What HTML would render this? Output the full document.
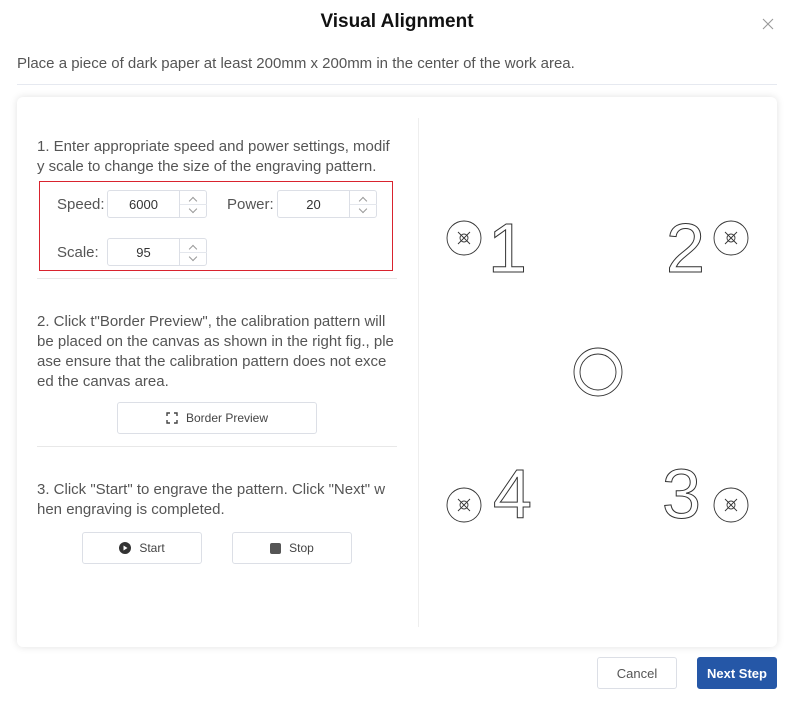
<!DOCTYPE html>
<html><head><meta charset="utf-8"><style>
*{box-sizing:border-box;margin:0;padding:0}
body{width:794px;height:724px;background:#fff;font-family:"Liberation Sans",sans-serif;position:relative;overflow:hidden;color:#555}
.abs{position:absolute}
.title{left:0;width:794px;top:11px;text-align:center;font-size:19px;font-weight:bold;color:#111}
.close{left:762px;top:18px}
.sub{left:17px;top:55px;font-size:15px;color:#555}
.hr{left:17px;width:760px;top:84px;height:1px;background:#e6e9f0}
.panel{left:17px;top:97px;width:760px;height:550px;background:#fff;border-radius:6px;box-shadow:0 0 8px rgba(0,0,0,.12)}
.vline{left:418px;top:118px;width:1px;height:509px;background:#eee}
.txt{font-size:15px;color:#555;line-height:20px}
.box{left:39px;top:181px;width:354px;height:90px;border:1px solid #d9232e}
.lbl{font-size:15px;color:#555}
.inp{width:100px;height:28px;border:1px solid #dcdfe6;border-radius:3px;background:#fff;font-size:13px;color:#333}
.inp .v{position:absolute;left:0;width:71px;top:6px;text-align:center}
.inp .sp{position:absolute;left:71px;top:0;width:28px;height:26px;border-left:1px solid #dcdfe6}
.inp .sp:after{content:"";position:absolute;left:0;right:0;top:13px;height:1px;background:#e4e7ed}
.sp i{position:absolute;left:10px;width:6px;height:6px;border-left:1px solid #999;border-top:1px solid #999}
.sep{left:37px;width:360px;height:1px;background:#e8e8e8}
.btn{border:1px solid #dcdfe6;border-radius:3px;background:#fff;font-size:12px;color:#444;text-align:center;display:flex;align-items:center;justify-content:center;gap:8px}
</style></head><body>
<div class="abs title">Visual Alignment</div>
<svg class="abs close" width="12" height="12" stroke="#999" stroke-width="1.1"><path d="M1 1l10 10M11 1L1 11"/></svg>
<div class="abs sub">Place a piece of dark paper at least 200mm x 200mm in the center of the work area.</div>
<div class="abs hr"></div>
<div class="abs panel"></div>
<div class="abs vline"></div>
<div class="abs txt" style="left:37px;top:137px;width:365px">1. Enter appropriate speed and power settings, modif<br>y scale to change the size of the engraving pattern.</div>
<div class="abs box"></div>
<div class="abs lbl" style="left:57px;top:196px">Speed:</div>
<div class="abs inp" style="left:107px;top:190px"><span class="v">6000</span><div class="sp"><i style="top:7px;transform:rotate(45deg)"></i><i style="top:15px;transform:rotate(225deg)"></i></div></div>
<div class="abs lbl" style="left:227px;top:196px">Power:</div>
<div class="abs inp" style="left:277px;top:190px"><span class="v">20</span><div class="sp"><i style="top:7px;transform:rotate(45deg)"></i><i style="top:15px;transform:rotate(225deg)"></i></div></div>
<div class="abs lbl" style="left:57px;top:244px">Scale:</div>
<div class="abs inp" style="left:107px;top:238px"><span class="v">95</span><div class="sp"><i style="top:7px;transform:rotate(45deg)"></i><i style="top:15px;transform:rotate(225deg)"></i></div></div>
<div class="abs sep" style="top:278px"></div>
<div class="abs txt" style="left:37px;top:312px;width:365px">2. Click t"Border Preview", the calibration pattern will<br>be placed on the canvas as shown in the right fig., ple<br>ase ensure that the calibration pattern does not exce<br>ed the canvas area.</div>
<div class="abs btn" style="left:117px;top:402px;width:200px;height:32px"><svg width="12" height="12" viewBox="0 0 12 12" fill="none" stroke="#444" stroke-width="1.4"><path d="M1 4V1h3M8 1h3v3M11 8v3H8M4 11H1V8"/></svg>Border Preview</div>
<div class="abs sep" style="top:446px"></div>
<div class="abs txt" style="left:37px;top:480px;width:365px">3. Click "Start" to engrave the pattern. Click "Next" w<br>hen engraving is completed.</div>
<div class="abs btn" style="left:82px;top:532px;width:120px;height:32px"><svg width="12" height="12" viewBox="0 0 12 12"><circle cx="6" cy="6" r="6" fill="#333"/><path d="M4.5 3.5L8.5 6L4.5 8.5Z" fill="#fff"/></svg>Start</div>
<div class="abs btn" style="left:232px;top:532px;width:120px;height:32px"><svg width="11" height="11"><rect width="11" height="11" rx="2" fill="#555"/></svg>Stop</div>
<svg class="abs" style="left:0;top:0" width="794" height="724" fill="none" stroke="#333" stroke-width="0.9">
<g><circle cx="464" cy="238" r="17"/><circle cx="464" cy="238" r="4"/><path d="M458 232l12 12M470 232l-12 12"/></g>
<g><circle cx="731" cy="238" r="17"/><circle cx="731" cy="238" r="4"/><path d="M725 232l12 12M737 232l-12 12"/></g>
<g><circle cx="464" cy="505" r="17"/><circle cx="464" cy="505" r="4"/><path d="M458 499l12 12M470 499l-12 12"/></g>
<g><circle cx="731" cy="505" r="17"/><circle cx="731" cy="505" r="4"/><path d="M725 499l12 12M737 499l-12 12"/></g>
<circle cx="598" cy="372" r="24"/><circle cx="598" cy="372" r="18"/>
<g font-family="Liberation Sans" font-size="70" stroke="#333" stroke-width="1" fill="none">
<text x="488" y="272">1</text><text x="666" y="272">2</text><text x="493" y="518">4</text><text x="662" y="518">3</text></g>
</svg>
<div class="abs btn" style="left:597px;top:657px;width:80px;height:32px;font-size:13px;color:#555">Cancel</div>
<div class="abs btn" style="left:697px;top:657px;width:80px;height:32px;font-size:13px;color:#fff;background:#2557a7;border-color:#2557a7;font-weight:bold">Next Step</div>
</body></html>
